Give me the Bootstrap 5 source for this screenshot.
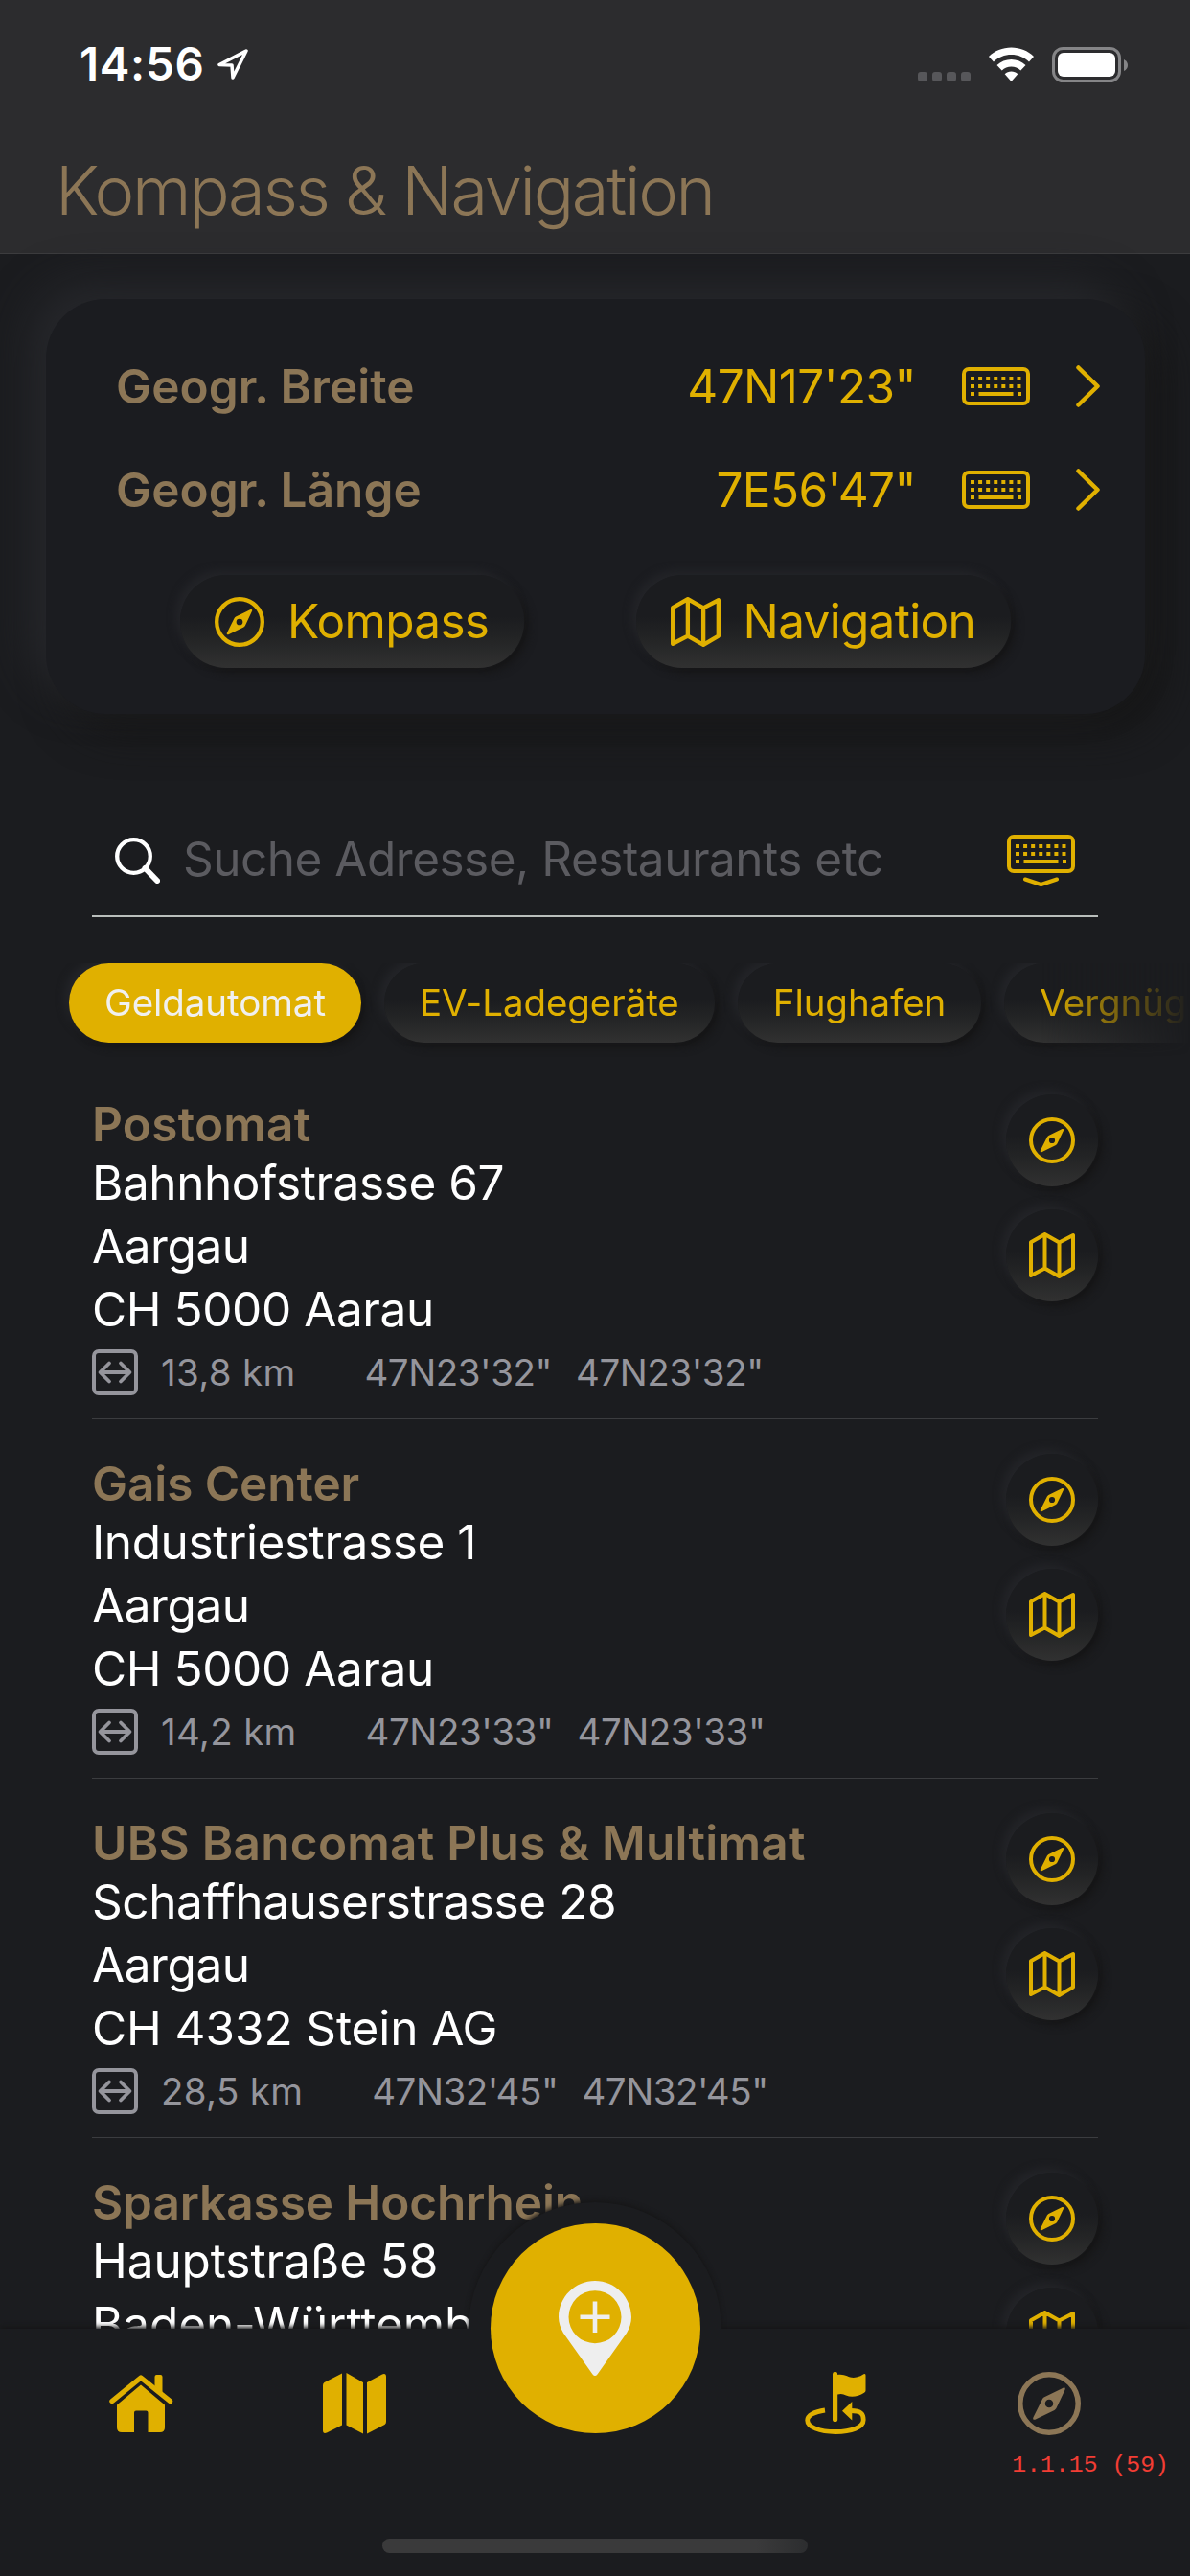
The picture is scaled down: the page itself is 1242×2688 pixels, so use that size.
<!DOCTYPE html>
<html lang="de" data-bs-theme="dark">
<head>
<meta charset="utf-8">
<meta name="viewport" content="width=device-width, initial-scale=1">
<title>Kompass &amp; Navigation</title>
<link rel="stylesheet" href="https://cdn.jsdelivr.net/npm/bootstrap@5.3.0/dist/css/bootstrap.min.css">
<style>
:root{--gold:#e0b000;--bronze:#8c7656;--ground:#1b1c1f}
body{background:var(--ground);color:#fff;font-family:Inter,"Liberation Sans",sans-serif;font-size:49.5px;line-height:66px;letter-spacing:-.42px;font-variant-ligatures:none}
svg{display:block;flex:none}
.gold{color:var(--gold)}
.bronze{color:var(--bronze)}
.app{width:1242px;height:2688px;position:relative}
.app-head{height:265px;background:#2c2c2e;border-bottom:1px solid #3c3c3e}
.status{height:134px;padding:0 64px 0 83px}
.clock{font-size:47.5px;font-weight:600;letter-spacing:.7px}
.locate{margin-left:12px}
.head-title{font-size:70.5px;font-weight:300;line-height:96px;padding-left:58px;margin-top:17px;letter-spacing:-2.32px}
.geo{margin:47px 47px 0 48px;height:433px;padding-top:37px;border-radius:62px;background:#1b1c20;box-shadow:-18px -18px 44px #26272b,18px 18px 44px #161616}
.geo-row{height:108px;padding:0 47px 0 73px}
.geo-label{font-weight:600;letter-spacing:.05px}
.geo-val{margin-right:48px;letter-spacing:-.6px}
.geo-actions{padding:35px 140px 0}
.soft{color:var(--gold);background:linear-gradient(#1b1c1f 45%,#232425 68%,#313131);box-shadow:-5px -5px 9px #232428,5px 5px 9px #161617;border:0}
.soft-btn{height:97px;border-radius:48px;padding:0 37px 0 36px;font-size:49.5px;line-height:97px;gap:24px;letter-spacing:-.7px}
.finder{margin:96px 96px 0;height:116px;border-bottom:2px solid #b9bebb;padding:0 24px 0 24px}
.hint{color:#5b5b60;margin:-5px 0 0 24px;letter-spacing:-.5px}
.chips{margin-top:48px;height:101px;padding-left:72px;gap:24px;-webkit-mask-image:linear-gradient(90deg,#000 1085px,transparent 1242px);mask-image:linear-gradient(90deg,#000 1085px,transparent 1242px)}
.soft-chip{flex:none;height:83px;border-radius:42px;font-size:38.5px;line-height:83px;padding:0 37px;white-space:nowrap;letter-spacing:-.07px}
.soft-chip.on{background:var(--gold);color:#f0f0f0}
.places{flex:1 1 0;min-height:0}
.place{height:375px;flex:none;margin:0 96px;border-bottom:1px solid #3b3c3f;padding-top:37px}
.place-name{font-weight:600;line-height:60px;margin-bottom:-2px;letter-spacing:.25px}
.place-name.snug{letter-spacing:-.08px}
.roomy{letter-spacing:-.1px}
.place-text{white-space:nowrap}
.meta{margin-top:9px;height:48px;font-size:38.5px;line-height:48px;color:#95959c}
.km{margin:0 72px 0 24px;letter-spacing:.3px}
.co{letter-spacing:-.45px;margin-right:25px}
.round-pair{margin-top:-1px}
.round{width:96px;height:96px;border-radius:50%;margin-bottom:24px}
.tabs{height:258px;flex:none;position:relative}
.tab-edge{position:absolute;inset:0;background:var(--ground);box-shadow:0 -2px 5px #161617}
.fab-ring{position:absolute;left:489px;top:-132px;width:264px;height:264px;border-radius:50%;background:var(--ground);box-shadow:0 -2px 5px #161617}
.tab-fill{position:absolute;inset:0;background:var(--ground)}
.tab-grid{position:relative;display:grid;grid-template-columns:223px 223px 279px 223px 223px;justify-content:center;align-items:center;justify-items:center;height:156px}
.fab{width:219px;height:219px;border-radius:50%;background:var(--gold);margin-top:-157px}
.build{position:absolute;right:22px;top:128px;font:24.8px/28px "Liberation Mono",monospace;letter-spacing:0;color:#f23d34}
.home-bar{position:absolute;left:399px;bottom:24px;width:444px;height:15px;border-radius:8px;background:linear-gradient(90deg,#3a3a3b 88%,#2c2d2f)}
</style>
<script src="https://cdn.jsdelivr.net/npm/bootstrap@5.3.0/dist/js/bootstrap.bundle.min.js"></script>
</head>
<body>
<svg width="0" height="0" class="position-absolute">
  <symbol id="compass" viewBox="0 0 48 48"><circle cx="24" cy="24" r="22" fill="none" stroke="currentColor" stroke-width="4"/><path fill="currentColor" fill-rule="evenodd" d="M34.6 12.1 20.4 19Q19.4 19.5 18.9 20.5L12 34.3C11.300 35.800 12.200 36.700 13.700 36L28 29Q28.900 28.500 29.400 27.600L36 13.700C36.600 12.300 35.900 11.500 34.600 12.100ZM24 20.900a3.100 3.100 0 1 1 0 6.200a3.100 3.100 0 0 1 0-6.200Z"/></symbol>
  <symbol id="map" viewBox="0 0 48 48"><path fill="none" stroke="currentColor" stroke-width="4" stroke-linejoin="round" d="M2 10.300 16.500 2 31.500 10.500 46 3V37.500L31.500 46 16.500 37.500 2 45ZM16.500 2V37.500M31.500 10.500V46"/></symbol>
  <symbol id="keys" viewBox="0 0 71 40"><rect x="2" y="2" width="67" height="36" rx="5" fill="none" stroke="currentColor" stroke-width="4"/><path stroke="currentColor" stroke-width="4" stroke-dasharray="4 4.080" d="M9 12H62M9 20H62"/><path stroke="currentColor" stroke-width="4" d="M9 28h4M17.500 28H53.500M58 28h4"/></symbol>
  <symbol id="range" viewBox="0 0 48 48"><rect x="2" y="2" width="44" height="44" rx="5" fill="none" stroke="currentColor" stroke-width="4"/><path d="M9 24H39M18 14.500 8.500 24 18 33.500M30 14.500 39.500 24 30 33.500" fill="none" stroke="currentColor" stroke-width="3.800" stroke-linecap="round" stroke-linejoin="round"/></symbol>
  <symbol id="chev" viewBox="0 0 25 44"><path d="M2.500 2.500 22.500 22 2.500 41.500" fill="none" stroke="currentColor" stroke-width="4.500" stroke-linecap="round" stroke-linejoin="round"/></symbol>
</svg>
<main class="app d-flex flex-column overflow-hidden">
  <header class="app-head flex-shrink-0">
    <div class="status d-flex align-items-center">
      <span class="clock">14:56</span>
      <svg class="locate" width="34" height="34" viewBox="0 0 34 34"><path d="M31 3 3 17.500 16 18 17 31Z" fill="none" stroke="#fff" stroke-width="3.500" stroke-linejoin="round"/></svg>
      <svg class="ms-auto" width="221" height="38" viewBox="957 48 221 38">
        <g fill="#57575a"><rect x="958" y="75" width="10" height="10" rx="3"/><rect x="973" y="75" width="10" height="10" rx="3"/><rect x="988" y="75" width="10" height="10" rx="3"/><rect x="1003" y="75" width="10" height="10" rx="3"/></g>
        <g fill="#fff"><path d="M1055.500 49.500C1046.500 49.500 1038 53 1032 59L1037 64.500C1042 59.500 1048.500 57 1055.500 57S1069 59.500 1074 64.500L1079 59C1073 53 1064.500 49.500 1055.500 49.500Z"/><path d="M1055.500 62C1050 62 1044.500 64.200 1040.500 68L1045.700 73.500C1048.300 71 1051.800 69.500 1055.500 69.500S1062.700 71 1065.300 73.500L1070.500 68C1066.500 64.200 1061 62 1055.500 62Z"/><path d="M1055.500 74.500C1053 74.500 1050.500 75.500 1048.700 77.200L1055.500 85 1062.300 77.200C1060.500 75.500 1058 74.500 1055.500 74.500Z"/></g>
        <rect x="1099.500" y="50.500" width="69" height="34" rx="10" fill="none" stroke="#858587" stroke-width="3"/><rect x="1104" y="55" width="60" height="25" rx="6" fill="#fff"/><path d="M1173 62Q1177 64 1177 68T1173 74Z" fill="#858587"/>
      </svg>
    </div>
    <h1 class="head-title bronze mb-0">Kompass &amp; Navigation</h1>
  </header>

  <section class="geo flex-shrink-0">
    <div class="geo-row d-flex align-items-center gold"><span class="geo-label bronze me-auto">Geogr. Breite</span><span class="geo-val">47N17'23"</span><svg width="71" height="40"><use href="#keys"/></svg><svg class="ms-5" width="25" height="44"><use href="#chev"/></svg></div>
    <div class="geo-row d-flex align-items-center gold"><span class="geo-label bronze me-auto">Geogr. Länge</span><span class="geo-val">7E56'47"</span><svg width="71" height="40"><use href="#keys"/></svg><svg class="ms-5" width="25" height="44"><use href="#chev"/></svg></div>
    <div class="geo-actions d-flex justify-content-between">
      <button class="btn soft soft-btn d-flex align-items-center"><svg width="52" height="52"><use href="#compass"/></svg><span>Kompass</span></button>
      <button class="btn soft soft-btn d-flex align-items-center"><svg width="52" height="52"><use href="#map"/></svg><span>Navigation</span></button>
    </div>
  </section>

  <div class="finder d-flex align-items-center flex-shrink-0">
    <svg width="47" height="48" viewBox="0 0 47 48"><circle cx="19.500" cy="19.500" r="17.300" fill="none" stroke="#fff" stroke-width="4.300"/><path d="M31.500 32 44 45" stroke="#fff" stroke-width="6" stroke-linecap="round"/></svg>
    <span class="hint me-auto">Suche Adresse, Restaurants etc</span>
    <svg class="gold" width="71" height="54" viewBox="0 0 71 54"><use href="#keys" width="71" height="40"/><path d="M19 46.500 35.500 52 52 46.500" fill="none" stroke="currentColor" stroke-width="4" stroke-linecap="round" stroke-linejoin="round"/></svg>
  </div>

  <nav class="chips d-flex align-items-start flex-shrink-0 overflow-hidden">
    <span class="soft soft-chip on">Geldautomat</span><span class="soft soft-chip">EV-Ladegeräte</span><span class="soft soft-chip">Flughafen</span><span class="soft soft-chip">Vergnüg</span>
  </nav>

  <section class="places d-flex flex-column overflow-hidden">
    <article class="place d-flex justify-content-between">
      <div class="place-text"><div class="place-name bronze">Postomat</div><div>Bahnhofstrasse 67</div><div>Aargau</div><div>CH 5000 Aarau</div>
        <div class="meta d-flex"><svg width="48" height="48"><use href="#range"/></svg><span class="km">13,8 km</span><span class="co">47N23'32"</span><span class="co">47N23'32"</span></div></div>
      <div class="round-pair"><div class="round soft d-flex align-items-center justify-content-center"><svg width="48" height="48"><use href="#compass"/></svg></div><div class="round soft d-flex align-items-center justify-content-center"><svg width="48" height="48"><use href="#map"/></svg></div></div>
    </article>
    <article class="place d-flex justify-content-between">
      <div class="place-text"><div class="place-name snug bronze">Gais Center</div><div>Industriestrasse 1</div><div>Aargau</div><div>CH 5000 Aarau</div>
        <div class="meta d-flex"><svg width="48" height="48"><use href="#range"/></svg><span class="km">14,2 km</span><span class="co">47N23'33"</span><span class="co">47N23'33"</span></div></div>
      <div class="round-pair"><div class="round soft d-flex align-items-center justify-content-center"><svg width="48" height="48"><use href="#compass"/></svg></div><div class="round soft d-flex align-items-center justify-content-center"><svg width="48" height="48"><use href="#map"/></svg></div></div>
    </article>
    <article class="place d-flex justify-content-between">
      <div class="place-text"><div class="place-name bronze">UBS Bancomat Plus &amp; Multimat</div><div>Schaffhauserstrasse 28</div><div>Aargau</div><div class="roomy">CH 4332 Stein AG</div>
        <div class="meta d-flex"><svg width="48" height="48"><use href="#range"/></svg><span class="km">28,5 km</span><span class="co">47N32'45"</span><span class="co">47N32'45"</span></div></div>
      <div class="round-pair"><div class="round soft d-flex align-items-center justify-content-center"><svg width="48" height="48"><use href="#compass"/></svg></div><div class="round soft d-flex align-items-center justify-content-center"><svg width="48" height="48"><use href="#map"/></svg></div></div>
    </article>
    <article class="place d-flex justify-content-between">
      <div class="place-text"><div class="place-name snug bronze">Sparkasse Hochrhein</div><div class="roomy">Hauptstraße 58</div><div class="roomy">Baden-Württemb</div></div>
      <div class="round-pair"><div class="round soft d-flex align-items-center justify-content-center"><svg width="48" height="48"><use href="#compass"/></svg></div><div class="round soft d-flex align-items-center justify-content-center"><svg width="48" height="48"><use href="#map"/></svg></div></div>
    </article>
  </section>

  <footer class="tabs">
    <div class="tab-edge"></div>
    <div class="fab-ring"></div>
    <div class="tab-fill"></div>
    <div class="tab-grid gold">
      <svg width="67" height="62" viewBox="0 0 67 62"><path fill="none" stroke="currentColor" stroke-width="5.400" stroke-linecap="round" stroke-linejoin="round" d="M3 28.500 33 4 63.500 28.500"/><path fill="currentColor" d="M47.500 13V3Q47.500 1 49.500 1H53.500Q55.500 1 55.500 3V20ZM33 11.500 58 32.500V56Q58 61 53 61H40.500V40.500Q40.500 38.500 38.500 38.500H28Q26 38.500 26 40.500V61H13Q8 61 8 56V32.500Z"/></svg>
      <svg width="66" height="64" viewBox="0 0 66 64"><path fill="currentColor" d="M0 13Q0 11 1.500 10L20 .5V54.500L4 62.500Q0 64 0 60ZM24.500 0 42 10V63.500L24.500 54.500ZM46 10 62 1.500Q66 0 66 4V51Q66 53 64.500 54L46 63.500Z"/></svg>
      <div class="fab d-flex align-items-center justify-content-center"><svg width="76" height="99" viewBox="0 0 76 99"><path fill="#eee" fill-rule="evenodd" d="M38 0C17 0 0 17 0 38C0 44 2 49 5 54.500L35.500 97.500Q38 100.500 40.500 97.500L71 54.500C74 49 76 44 76 38C76 17 59 0 38 0ZM38 10.200a27.500 27.500 0 1 1 0 55a27.500 27.500 0 0 1 0-55Z"/><path d="M38 21.500V54M22.500 37.700H53.500" stroke="#eee" stroke-width="4.600"/></svg></div>
      <svg width="64" height="66" viewBox="0 0 64 66"><path fill="currentColor" d="M29 2.500A2.600 2.600 0 0 1 34.200 2.500V3C43 1.500 46 7.500 54 5.500Q58.500 4.500 61.500 2.300Q63.500 1.200 63.500 3.500V19.500Q63.500 20.800 62 21.700C56 25.500 49 27 43 24.500Q39 22 34.200 23.500V49.500A2.600 2.600 0 0 1 29 49.500ZM39 40.700 49.300 31V50.500Z"/><path fill="none" stroke="currentColor" stroke-width="4.800" d="M21 40C10 41.500 2.700 45.500 2.700 50.500C2.700 57.500 15.500 62.500 32 62.500S61.200 58 61.200 50C61.200 44 59 40.500 48 40.500"/></svg>
      <svg class="bronze" width="66" height="66"><use href="#compass"/></svg>
    </div>
    <div class="build">1.1.15 (59)</div>
    <div class="home-bar"></div>
  </footer>
</main>
</body>
</html>
